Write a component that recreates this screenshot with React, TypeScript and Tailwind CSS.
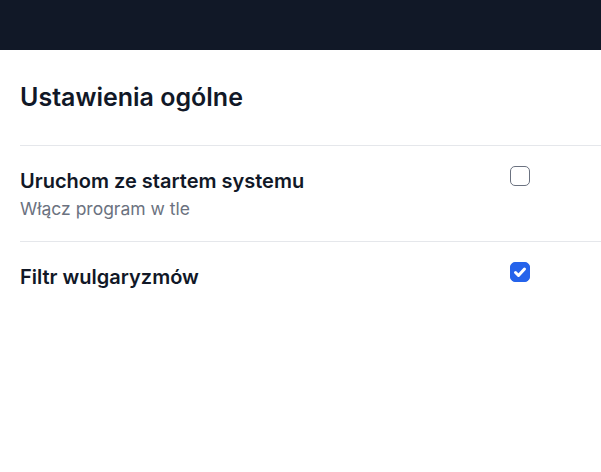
import { useState } from "react";

type Setting = {
  id: string;
  label: string;
  hint?: string;
  checked: boolean;
};

const initial: Setting[] = [
  { id: "autostart", label: "Uruchom ze startem systemu", hint: "Włącz program w tle", checked: false },
  { id: "profanity", label: "Filtr wulgaryzmów", checked: true },
];

function Checkbox({ checked, onChange }: { checked: boolean; onChange: () => void }) {
  return (
    <label className="relative block w-5 h-5 cursor-pointer">
      <input
        type="checkbox"
        checked={checked}
        onChange={onChange}
        className="peer m-0 block w-5 h-5 appearance-none rounded-[5px] border-[1.5px] border-[#6b7280] bg-white checked:border-[#2563eb] checked:bg-[#2563eb]"
      />
      <svg
        viewBox="0 0 20 20"
        className="pointer-events-none absolute inset-0 hidden w-5 h-5 text-white peer-checked:block"
        fill="none"
        stroke="currentColor"
        strokeWidth={3}
        strokeLinecap="round"
        strokeLinejoin="round"
      >
        <path d="M5.5 10.5l3 3 6-6.5" />
      </svg>
    </label>
  );
}

export default function App() {
  const [settings, setSettings] = useState(initial);

  const toggle = (id: string) =>
    setSettings((s) => s.map((x) => (x.id === id ? { ...x, checked: !x.checked } : x)));

  return (
    <div className="min-h-screen bg-white font-['Inter',sans-serif] text-[#111827] overflow-hidden">
      <header className="h-[50px] bg-[#111827]" />
      <main>
        <h1 className="px-5 pt-[31px] pb-[32px] text-[25px] leading-8 font-semibold">Ustawienia ogólne</h1>
        {settings.map((s) => (
          <div key={s.id} className="ml-5 flex items-start border-t border-[#e5e7eb] py-5">
            <div className="flex-1 flex flex-col">
              <span className="text-xl leading-[30px] font-semibold">{s.label}</span>
              {s.hint && <span className="text-[17.5px] leading-[25px] text-[#6b7280]">{s.hint}</span>}
            </div>
            <div className="w-[91px]">
              <Checkbox checked={s.checked} onChange={() => toggle(s.id)} />
            </div>
          </div>
        ))}
      </main>
    </div>
  );
}
